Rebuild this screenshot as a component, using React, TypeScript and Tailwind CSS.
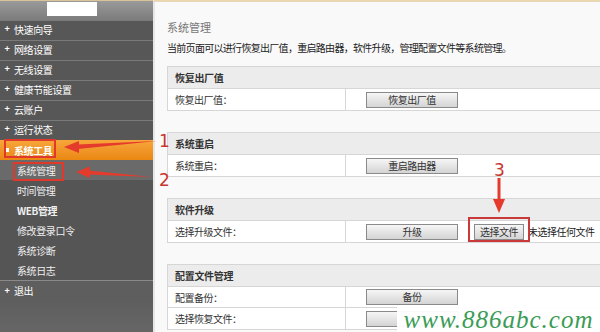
import React from "react";

const font = { fontFamily: '"Noto Sans CJK SC", "Noto Sans", sans-serif' };

function Btn({ label, w = "w-[92px]" }: { label: string; w?: string }) {
  return (
    <div
      className={`${w} h-[16px] border border-[#8a8a8a] bg-gradient-to-b from-[#f6f6f6] to-[#d4d4d4] flex items-center justify-center text-[10px] tracking-[-0.5px] leading-none text-[#333]`}
    >
      {label}
    </div>
  );
}

function Row({ label, children, last }: { label: string; children?: React.ReactNode; last?: boolean }) {
  return (
    <div className={`flex h-[21px] ${last ? "" : "border-b border-[#d6d6d6]"}`}>
      <div className="w-[178px] shrink-0 border-r border-[#d6d6d6] pl-[7px] flex items-center text-[10px] tracking-[-0.5px] text-[#333]">
        {label}
      </div>
      <div className="flex items-center pl-[20px] gap-[16px]">{children}</div>
    </div>
  );
}

function Section({ title, children }: { title: string; children: React.ReactNode }) {
  return (
    <div className="w-[450px] border border-[#d6d6d6] bg-white">
      <div className="h-[22px] bg-[#ececec] border-b border-[#d6d6d6] pl-[7px] flex items-center text-[10px] tracking-[-0.3px] font-bold text-[#333]">
        {title}
      </div>
      {children}
    </div>
  );
}

const mainItems = ["快速向导", "网络设置", "无线设置", "健康节能设置", "云账户", "运行状态"];
const subItems = ["系统管理", "时间管理", "WEB管理", "修改登录口令", "系统诊断", "系统日志"];

export default function App() {
  return (
    <div className="relative w-[600px] h-[332px] overflow-hidden flex bg-[#f9f9f9]" style={font}>
      {/* Sidebar */}
      <div className="w-[153px] shrink-0 flex flex-col bg-[#5c5c5c]">
        <div className="h-[20px] bg-gradient-to-b from-[#9a9a9a] to-[#7c7c7c] border-t border-[#d9c49a] flex items-start">
          <div className="ml-[47px] mt-[1px] w-[50px] h-[14px] bg-white" />
        </div>
        {mainItems.map((t) => (
          <div
            key={t}
            className="h-[20px] bg-[#575757] border-t border-[#7a7a7a] flex items-center pb-[3px] text-[10px] tracking-[-0.4px] text-white"
          >
            <span className="w-[14px] text-center text-[9px] font-bold">+</span>
            <span>{t}</span>
          </div>
        ))}
        <div className="h-[20px] bg-gradient-to-b from-[#f7a63a] to-[#ea8710] flex items-center text-[10px] tracking-[-0.4px] text-white font-bold">
          <span className="w-[14px] flex justify-center">
            <span className="w-[4px] h-[4px] bg-white" />
          </span>
          <span>系统工具</span>
        </div>
        {subItems.map((t, i) => (
          <div
            key={t}
            className={`h-[20px] flex items-center pl-[17px] text-[10px] tracking-[-0.4px] text-[#f0f0f0] ${
              i === 0 ? "bg-[#6a6a6a]" : "bg-[#555555]"
            } ${t === "WEB管理" ? "font-bold" : ""}`}
          >
            {t}
          </div>
        ))}
        <div className="h-[20px] bg-[#5e5e5e] border-t border-[#8a8a8a] flex items-center text-[10px] tracking-[-0.4px] text-white">
          <span className="w-[14px] text-center text-[9px] font-bold">+</span>
          <span>退出</span>
        </div>
        <div className="flex-1 bg-gradient-to-b from-[#5e5e5e] to-[#666666]" />
      </div>

      {/* Content */}
      <div className="flex-1 flex flex-col border-l-2 border-[#e6e6e6] border-t-2 border-t-[#e9d7b2] pl-[12px]">
        <div className="h-[18px] mt-[16px] flex items-center text-[11px] text-[#777]">系统管理</div>
        <div className="h-[18px] mt-[2px] flex items-center text-[10px] tracking-[-0.7px] text-[#222]">
          当前页面可以进行恢复出厂值，重启路由器，软件升级，管理配置文件等系统管理。
        </div>
        <div className="mt-[10px]">
          <Section title="恢复出厂值">
            <Row label="恢复出厂值：" last>
              <Btn label="恢复出厂值" />
            </Row>
          </Section>
        </div>
        <div className="mt-[21px]">
          <Section title="系统重启">
            <Row label="系统重启：" last>
              <Btn label="重启路由器" />
            </Row>
          </Section>
        </div>
        <div className="mt-[21px]">
          <Section title="软件升级">
            <Row label="选择升级文件：" last>
              <Btn label="升级" />
              <div className="flex items-center gap-[4px]">
                <Btn label="选择文件" w="w-[50px]" />
                <span className="text-[10px] tracking-[-0.5px] text-[#222]">未选择任何文件</span>
              </div>
            </Row>
          </Section>
        </div>
        <div className="mt-[21px]">
          <Section title="配置文件管理">
            <Row label="配置备份：">
              <Btn label="备份" />
            </Row>
            <Row label="选择恢复文件：" last>
              <Btn label="" />
              <Btn label="" w="w-[50px]" />
            </Row>
          </Section>
        </div>
      </div>

      {/* Annotations */}
      <div className="absolute left-[4px] top-[139px] w-[52px] h-[19px] border-2 border-[#e0382a]" />
      <div className="absolute left-[13px] top-[162px] w-[51px] h-[19px] border-2 border-[#e0382a]" />
      <div className="absolute left-[468px] top-[217px] w-[62px] h-[25px] border-2 border-[#c9393a]" />
      <span className="absolute left-[159px] top-[133px] text-[17px] leading-none text-[#c8352e]" style={{ fontFamily: '"DejaVu Sans", sans-serif' }}>1</span>
      <span className="absolute left-[159px] top-[172px] text-[17px] leading-none text-[#c8352e]" style={{ fontFamily: '"DejaVu Sans", sans-serif' }}>2</span>
      <span className="absolute left-[494px] top-[162px] text-[17px] leading-none text-[#c8352e]" style={{ fontFamily: '"DejaVu Sans", sans-serif' }}>3</span>
      <svg className="absolute left-0 top-0" width="600" height="332" viewBox="0 0 600 332">
        <path d="M157 141 L78 144.5 L78 149 Z" fill="#e53b2c" />
        <path d="M64 147 L79 141 L79 153 Z" fill="#e53b2c" />
        <path d="M152 177 L88 170.5 L88 174.5 Z" fill="#e53b2c" />
        <path d="M76 172 L90 166.5 L90 178 Z" fill="#e53b2c" />
        <path d="M497.5 178 L500.5 178 L500.5 200 L497.5 200 Z" fill="#e53b2c" />
        <path d="M499 213 L493 199 L505 199 Z" fill="#e53b2c" />
      </svg>
      <div
        className="absolute left-[397px] top-[307px] w-[203px] h-[25px] bg-white/95 flex items-center justify-center text-[25px] italic text-[#3a9c55] tracking-[1px]"
        style={{ fontFamily: '"Liberation Serif", serif' }}
      >
        www.886abc.com
      </div>
    </div>
  );
}
